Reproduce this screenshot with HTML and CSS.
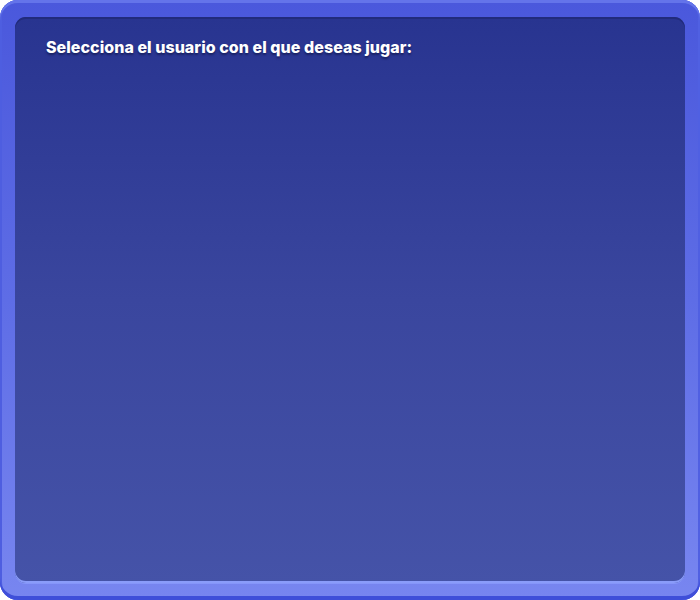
FILE: index.html
```html
<!DOCTYPE html>
<html lang="es">
<head>
<meta charset="utf-8">
<title>Seleccionar usuario</title>
<link rel="stylesheet" href="styles.css">
</head>
<body>
<div class="frame">
  <div class="panel">
    <h1 class="title">Selecciona el usuario con el que deseas jugar:</h1>
  </div>
</div>
</body>
</html>
```
FILE: styles.css
```css
html, body {
  margin: 0;
  padding: 0;
  width: 700px;
  height: 600px;
  background: #ffffff;
}
.frame {
  box-sizing: border-box;
  width: 700px;
  height: 600px;
  padding: 17px 15px 17px 15px;
  border-radius: 18px;
  background: linear-gradient(180deg, #4a58dc 0%, #5e6de6 50%, #7886f0 100%);
  box-shadow: inset 0 3px 0 #6474ea, inset 0 -4px 0 #3f4fd9, inset 2px 0 0 #4e5ee0, inset -2px 0 0 #5060e2;
  display: flex;
}
.panel {
  flex: 1;
  box-sizing: border-box;
  border-radius: 11px;
  background: linear-gradient(180deg, #283490 0%, #3a469e 50%, #4553a8 100%);
  box-shadow: inset 0 2px 0 #212b7c, inset 0 -2px 0 #8a9cfa, 0 1px 0 #8696fa;
  padding: 19px 31px;
}
.title {
  margin: 0;
  font-family: "Inter", "Open Sans", sans-serif;
  font-weight: 800;
  font-size: 16px;
  line-height: 22px;
  color: #ffffff;
  letter-spacing: 0.05px;
  text-shadow: 0 2px 2px rgba(10, 14, 60, 0.55);
}
```
